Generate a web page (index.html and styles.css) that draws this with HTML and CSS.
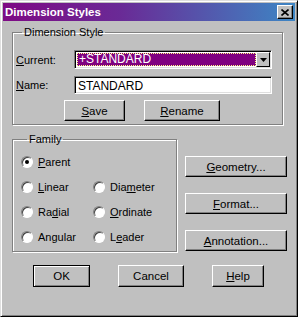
FILE: index.html
```html
<!DOCTYPE html>
<html lang="en">
<head>
    <meta charset="UTF-8">
    <title>Dimension Styles</title>
    <link rel="stylesheet" href="styles.css">
</head>
<body>

    <div class="window">
        <div class="titlebar">
            <span class="title">Dimension Styles</span>
            <span class="close-btn">
                <svg width="8" height="7" viewBox="0 0 8 7"><path d="M0.5 0.5 L7.5 6.5 M7.5 0.5 L0.5 6.5" stroke="#000" stroke-width="1.6"/></svg>
            </span>
        </div>

        <fieldset class="group dim-group">
            <legend>Dimension Style</legend>
            <div class="form-grid">
                <label><u>C</u>urrent:</label>
                <div class="combo">
                    <div class="combo-value"><span class="focus-box">+STANDARD</span></div>
                    <span class="combo-arrow">
                        <svg width="7" height="4" viewBox="0 0 7 4"><path d="M0 0 H7 L3.5 4 Z" fill="#000"/></svg>
                    </span>
                </div>
                <label><u>N</u>ame:</label>
                <div class="textbox">STANDARD</div>
            </div>
            <div class="style-buttons">
                <button class="btn btn-save"><u>S</u>ave</button>
                <button class="btn btn-rename"><u>R</u>ename</button>
            </div>
        </fieldset>

        <div class="middle">
            <fieldset class="group family-group">
                <legend>Family</legend>
                <div class="radio-grid">
                    <div class="radio-item"><span class="radio checked"></span><span><u>P</u>arent</span></div>
                    <div class="radio-item"></div>
                    <div class="radio-item"><span class="radio"></span><span><u>L</u>inear</span></div>
                    <div class="radio-item"><span class="radio"></span><span>Dia<u>m</u>eter</span></div>
                    <div class="radio-item"><span class="radio"></span><span>Ra<u>d</u>ial</span></div>
                    <div class="radio-item"><span class="radio"></span><span><u>O</u>rdinate</span></div>
                    <div class="radio-item"><span class="radio"></span><span>An<u>g</u>ular</span></div>
                    <div class="radio-item"><span class="radio"></span><span>L<u>e</u>ader</span></div>
                </div>
            </fieldset>

            <div class="side-buttons">
                <button class="btn btn-wide"><u>G</u>eometry...</button>
                <button class="btn btn-wide"><u>F</u>ormat...</button>
                <button class="btn btn-wide"><u>A</u>nnotation...</button>
            </div>
        </div>

        <div class="bottom-buttons">
            <button class="btn btn-default btn-ok">OK</button>
            <button class="btn btn-cancel">Cancel</button>
            <button class="btn btn-help"><u>H</u>elp</button>
        </div>
    </div>

</body>
</html>
```

FILE: styles.css
```css
body {
    margin: 0;
    padding: 0;
    background: #c0c0c0;
    font-family: "Liberation Sans", Arial, sans-serif;
    font-size: 11px;
    color: #000;
}
.window {
    width: 298px;
    height: 317px;
    box-sizing: border-box;
    background: #c0c0c0;
    border-top: 1px solid #dfdfdf;
    border-left: 1px solid #dfdfdf;
    border-right: 1px solid #000;
    border-bottom: 1px solid #000;
    box-shadow: inset 1px 1px 0 #fff, inset -1px -1px 0 #808080;
    padding: 2px;
}
.titlebar {
    height: 18px;
    display: flex;
    align-items: center;
    justify-content: space-between;
    padding: 0 2px 0 2px;
    background: linear-gradient(to right, #7e0a84 0%, #6a2a96 40%, #3d86c4 100%);
}
.title {
    color: #fff;
    font-weight: bold;
    font-size: 11.5px;
}
.close-btn {
    width: 16px;
    height: 14px;
    box-sizing: border-box;
    background: #c0c0c0;
    border-top: 1px solid #fff;
    border-left: 1px solid #fff;
    border-right: 1px solid #000;
    border-bottom: 1px solid #000;
    box-shadow: inset -1px -1px 0 #808080;
    display: flex;
    align-items: center;
    justify-content: center;
}
.group {
    box-sizing: border-box;
    margin: 0;
    border: 1px solid #808080;
    box-shadow: inset 1px 1px 0 #fff, 1px 1px 0 #fff;
}
.group legend {
    padding: 0 2px;
    margin-left: 6px;
    line-height: 13px;
}
.dim-group {
    width: 271px;
    margin: 5px 0 0 9px;
    padding: 11px 3px 3px 3px;
}
.form-grid {
    display: grid;
    grid-template-columns: 58px 198px;
    grid-template-rows: 19px 18px;
    row-gap: 7px;
    align-items: center;
}
.combo {
    height: 19px;
    display: flex;
    box-sizing: border-box;
    border-top: 1px solid #808080;
    border-left: 1px solid #808080;
    border-right: 1px solid #fff;
    border-bottom: 1px solid #fff;
    box-shadow: inset 1px 1px 0 #000, inset -1px -1px 0 #dfdfdf;
    padding: 2px;
    background: #fff;
}
.combo-value {
    flex: 1;
    background: #800080;
    display: flex;
}
.focus-box {
    flex: 1;
    border: 1px dotted #ffff80;
    color: #fff;
    font-size: 12px;
    line-height: 11px;
    padding-left: 1px;
}
.combo-arrow {
    width: 14px;
    box-sizing: border-box;
    background: #c0c0c0;
    border-top: 1px solid #fff;
    border-left: 1px solid #fff;
    border-right: 1px solid #000;
    border-bottom: 1px solid #000;
    display: flex;
    align-items: center;
    justify-content: center;
    margin: -1px -1px -1px 0;
}
.textbox {
    height: 18px;
    box-sizing: border-box;
    background: #fff;
    border-top: 1px solid #808080;
    border-left: 1px solid #808080;
    border-right: 1px solid #fff;
    border-bottom: 1px solid #fff;
    box-shadow: inset 1px 1px 0 #000, inset -1px -1px 0 #dfdfdf;
    padding: 2px 3px;
    font-size: 12px;
    line-height: 14px;
}
.style-buttons {
    display: flex;
    gap: 19px;
    margin: 6px 0 0 48px;
}
.btn {
    box-sizing: border-box;
    height: 21px;
    padding: 0;
    background: #c0c0c0;
    font-family: "Liberation Sans", Arial, sans-serif;
    font-size: 11.5px;
    color: #000;
    border-top: 1px solid #fff;
    border-left: 1px solid #fff;
    border-right: 1px solid #000;
    border-bottom: 1px solid #000;
    box-shadow: inset -1px -1px 0 #808080;
}
.btn-save {
    width: 61px;
}
.btn-rename {
    width: 76px;
}
.middle {
    display: flex;
    margin: 8px 0 0 9px;
}
.family-group {
    width: 165px;
    padding: 3px 3px 2px 8px;
}
.radio-grid {
    display: grid;
    grid-template-columns: 72px 1fr;
    grid-auto-rows: 25px;
}
.radio-item {
    display: flex;
    align-items: center;
    gap: 5px;
}
.radio {
    width: 12px;
    height: 12px;
    box-sizing: border-box;
    border-radius: 50%;
    background: #fff;
    border: 1px solid;
    border-color: #808080 #fff #fff #808080;
    box-shadow: inset 1px 1px 0 #404040;
    position: relative;
}
.radio.checked::after {
    content: "";
    position: absolute;
    left: 3px;
    top: 3px;
    width: 4px;
    height: 4px;
    border-radius: 50%;
    background: #000;
}
.side-buttons {
    display: flex;
    flex-direction: column;
    gap: 16px;
    margin: 23px 0 0 8px;
}
.btn-wide {
    width: 102px;
}
.bottom-buttons {
    display: flex;
    margin: 13px 0 0 30px;
}
.bottom-buttons .btn {
    height: 22px;
}
.btn-ok {
    width: 57px;
}
.btn-cancel {
    width: 66px;
    margin-left: 28px;
}
.btn-help {
    width: 52px;
    margin-left: 28px;
}
.btn-default {
    border: 1px solid #000;
    box-shadow: inset 1px 1px 0 #fff, inset -1px -1px 0 #808080;
}
```
